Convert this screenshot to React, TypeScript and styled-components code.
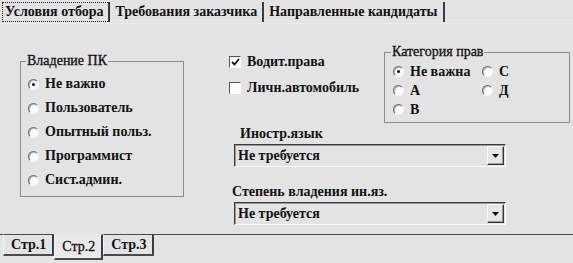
import React from "react";
import styled, { createGlobalStyle } from "styled-components";

const Global = createGlobalStyle`
  html, body { margin: 0; padding: 0; background: #e3e3e3; }
  body {
    font-family: "Liberation Serif", "Times New Roman", serif;
    font-weight: bold;
    font-size: 14px;
    line-height: 16px;
    color: #111;
  }
  * { box-sizing: border-box; }
`;

const Window = styled.div`
  width: 573px;
  height: 263px;
  overflow: hidden;
  background: #e3e3e3;
  display: flex;
  flex-direction: column;
`;

const TopTabs = styled.div`
  height: 24px;
  display: flex;
  align-items: stretch;
  padding-top: 2px;
  border-bottom: 1px solid #ededed;
`;

const TopTab = styled.div<{ $active?: boolean }>`
  display: flex;
  align-items: center;
  padding: 0 5px 0 3px;
  height: 20px;
  border-right: 2px solid #3c3c3c;
  margin-right: 2px;
  white-space: nowrap;
  outline: ${(p) => (p.$active ? "1px dotted #222" : "none")};
  outline-offset: -1px;
  margin-left: ${(p) => (p.$active ? "2px" : "0")};
`;

const Panel = styled.div`
  height: 211px;
  display: flex;
  border-bottom: 1px solid #4a4a4a;
`;

const Group = styled.fieldset<{ $pl: number }>`
  margin: 0;
  border: 1px solid #8c8c8c;
  padding: 0 4px 2px ${(p) => p.$pl}px;
`;

const Legend = styled.legend<{ $shift: number }>`
  padding: 0 1px;
  margin-left: ${(p) => p.$shift}px;
  font-weight: normal;
  line-height: 16px;
  -webkit-text-stroke: 0.3px #111;
`;

const LeftCol = styled.div`
  margin-left: 20px;
  margin-top: 29px;
  width: 164px;
`;

const LeftGroup = styled(Group)`
  height: 144px;
  padding-top: 3px;
`;

const RadioRow = styled.div<{ $h: number }>`
  height: ${(p) => p.$h}px;
  display: flex;
  align-items: center;
  gap: 6px;
  white-space: nowrap;
`;

const RadioDot = styled.span<{ $on?: boolean }>`
  width: 11px;
  height: 11px;
  border-radius: 50%;
  border: 1px solid;
  border-color: #6a6a6a #f4f4f4 #f4f4f4 #6a6a6a;
  background: #fbfbfb;
  box-shadow: inset 1px 1px 0 #b8b8b8;
  display: inline-flex;
  align-items: center;
  justify-content: center;
  flex: none;
  &::after {
    content: "";
    width: 3px;
    height: 3px;
    border-radius: 50%;
    background: #111;
    display: ${(p) => (p.$on ? "block" : "none")};
  }
`;

const RightArea = styled.div`
  margin-left: 45px;
  margin-top: 20px;
  width: 341px;
  display: flex;
  flex-direction: column;
`;

const TopRow = styled.div`
  display: flex;
`;

const Checks = styled.div`
  width: 155px;
  padding-top: 10px;
`;

const CheckRow = styled.div`
  height: 26px;
  display: flex;
  align-items: flex-start;
  gap: 6px;
  white-space: nowrap;
`;

const CheckBox = styled.span`
  width: 12px;
  height: 12px;
  margin-top: 2px;
  border: 1px solid;
  border-color: #555 #fafafa #fafafa #555;
  background: #fcfcfc;
  display: inline-flex;
  align-items: center;
  justify-content: center;
  flex: none;
`;

const CatGroup = styled(Group)`
  width: 186px;
  height: 79px;
  padding-top: 2px;
`;

const CatGrid = styled.div`
  display: grid;
  grid-template-columns: 89px 1fr;
`;

const Label = styled.div<{ $ml: number; $mt: number }>`
  margin-left: ${(p) => p.$ml}px;
  margin-top: ${(p) => p.$mt}px;
  height: 16px;
  white-space: nowrap;
`;

const Combo = styled.div`
  margin-left: 5px;
  margin-top: 2px;
  width: 272px;
  height: 23px;
  border: 1px solid;
  border-color: #3a3a3a #fbfbfb #fbfbfb #3a3a3a;
  box-shadow: inset 1px 1px 0 #9a9a9a;
  display: flex;
  align-items: center;
  justify-content: space-between;
  padding: 0 1px 0 3px;
`;

const ComboButton = styled.span`
  width: 17px;
  height: 19px;
  border: 1px solid;
  border-color: #fafafa #333 #333 #fafafa;
  box-shadow: inset -1px -1px 0 #9c9c9c;
  background: #e6e6e6;
  display: flex;
  align-items: center;
  justify-content: center;
`;

const BottomTabs = styled.div`
  display: flex;
  align-items: flex-start;
  padding-left: 3px;
  margin-top: -1px;
`;

const BottomTab = styled.div<{ $active?: boolean }>`
  height: ${(p) => (p.$active ? 26 : 22)}px;
  padding: 0 6px 0 7px;
  display: flex;
  align-items: ${(p) => (p.$active ? "flex-end" : "center")};
  padding-bottom: ${(p) => (p.$active ? 3 : 0)}px;
  border-top: 1px solid ${(p) => (p.$active ? "transparent" : "#4a4a4a")};
  border-left: 1px solid #f6f6f6;
  border-right: 2px solid #3c3c3c;
  border-bottom: 2px solid #4a4a4a;
  background: ${(p) => (p.$active ? "#e9e9e9" : "#e3e3e3")};
  font-weight: ${(p) => (p.$active ? "normal" : "bold")};
  -webkit-text-stroke: ${(p) => (p.$active ? "0.3px #111" : "0")};
`;

const Arrow = () => (
  <svg width="7" height="4" viewBox="0 0 7 4">
    <path d="M0 0h7L3.5 4z" fill="#111" />
  </svg>
);

const Tick = () => (
  <svg width="9" height="8" viewBox="0 0 9 8">
    <path d="M1 4l2.5 2.5L8 1" stroke="#111" strokeWidth="1.8" fill="none" />
  </svg>
);

const pcOptions = ["Не важно", "Пользователь", "Опытный польз.", "Программист", "Сист.админ."];

export default function App() {
  return (
    <Window>
      <Global />
      <TopTabs>
        <TopTab $active>Условия отбора</TopTab>
        <TopTab>Требования заказчика</TopTab>
        <TopTab>Направленные кандидаты</TopTab>
      </TopTabs>
      <Panel>
        <LeftCol>
          <LeftGroup $pl={7}>
            <Legend $shift={-2}>Владение ПК</Legend>
            {pcOptions.map((o, i) => (
              <RadioRow key={o} $h={24}>
                <RadioDot $on={i === 0} />
                {o}
              </RadioRow>
            ))}
          </LeftGroup>
        </LeftCol>
        <RightArea>
          <TopRow>
            <Checks>
              <CheckRow>
                <CheckBox>
                  <Tick />
                </CheckBox>
                Водит.права
              </CheckRow>
              <CheckRow>
                <CheckBox />
                Личн.автомобиль
              </CheckRow>
            </Checks>
            <CatGroup $pl={8}>
              <Legend $shift={-2}>Категория прав</Legend>
              <CatGrid>
                <RadioRow $h={19}>
                  <RadioDot $on />
                  Не важна
                </RadioRow>
                <RadioRow $h={19}>
                  <RadioDot />С
                </RadioRow>
                <RadioRow $h={19}>
                  <RadioDot />А
                </RadioRow>
                <RadioRow $h={19}>
                  <RadioDot />Д
                </RadioRow>
                <RadioRow $h={19}>
                  <RadioDot />В
                </RadioRow>
              </CatGrid>
            </CatGroup>
          </TopRow>
          <Label $ml={11} $mt={3}>Иностр.язык</Label>
          <Combo>
            Не требуется
            <ComboButton>
              <Arrow />
            </ComboButton>
          </Combo>
          <Label $ml={3} $mt={17}>Степень владения ин.яз.</Label>
          <Combo>
            Не требуется
            <ComboButton>
              <Arrow />
            </ComboButton>
          </Combo>
        </RightArea>
      </Panel>
      <BottomTabs>
        <BottomTab>Стр.1</BottomTab>
        <BottomTab $active>Стр.2</BottomTab>
        <BottomTab>Стр.3</BottomTab>
      </BottomTabs>
    </Window>
  );
}
